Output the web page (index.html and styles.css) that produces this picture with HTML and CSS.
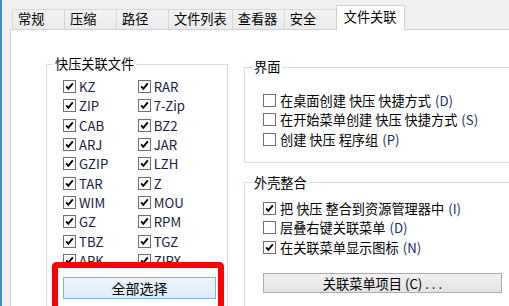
FILE: index.html
```html
<!DOCTYPE html>
<html lang="zh-CN">
<head>
  <meta charset="UTF-8" />
  <title>选项 - 文件关联</title>
  <link rel="stylesheet" href="styles.css">
</head>
<body>
  <div class="window">
    <div class="frame"></div>
    <div class="dialog">
      <ul class="tabs">
        <li class="tab">常规</li>
        <li class="tab">压缩</li>
        <li class="tab">路径</li>
        <li class="tab">文件列表</li>
        <li class="tab">查看器</li>
        <li class="tab">安全</li>
        <li class="tab active">文件关联</li>
      </ul>

      <div class="panel">
        <!-- 关联文件类型 -->
        <fieldset class="group group-types">
          <legend>快压关联文件</legend>
          <div class="type-grid">
            <label class="check"><span class="box"><svg viewBox="0 0 13 13"><path d="M2.6 6.4 L5.1 9.3 L10.4 2.9"/></svg></span>KZ</label>
            <label class="check"><span class="box"><svg viewBox="0 0 13 13"><path d="M2.6 6.4 L5.1 9.3 L10.4 2.9"/></svg></span>RAR</label>
            <label class="check"><span class="box"><svg viewBox="0 0 13 13"><path d="M2.6 6.4 L5.1 9.3 L10.4 2.9"/></svg></span>ZIP</label>
            <label class="check"><span class="box"><svg viewBox="0 0 13 13"><path d="M2.6 6.4 L5.1 9.3 L10.4 2.9"/></svg></span>7-Zip</label>
            <label class="check"><span class="box"><svg viewBox="0 0 13 13"><path d="M2.6 6.4 L5.1 9.3 L10.4 2.9"/></svg></span>CAB</label>
            <label class="check"><span class="box"><svg viewBox="0 0 13 13"><path d="M2.6 6.4 L5.1 9.3 L10.4 2.9"/></svg></span>BZ2</label>
            <label class="check"><span class="box"><svg viewBox="0 0 13 13"><path d="M2.6 6.4 L5.1 9.3 L10.4 2.9"/></svg></span>ARJ</label>
            <label class="check"><span class="box"><svg viewBox="0 0 13 13"><path d="M2.6 6.4 L5.1 9.3 L10.4 2.9"/></svg></span>JAR</label>
            <label class="check"><span class="box"><svg viewBox="0 0 13 13"><path d="M2.6 6.4 L5.1 9.3 L10.4 2.9"/></svg></span>GZIP</label>
            <label class="check"><span class="box"><svg viewBox="0 0 13 13"><path d="M2.6 6.4 L5.1 9.3 L10.4 2.9"/></svg></span>LZH</label>
            <label class="check"><span class="box"><svg viewBox="0 0 13 13"><path d="M2.6 6.4 L5.1 9.3 L10.4 2.9"/></svg></span>TAR</label>
            <label class="check"><span class="box"><svg viewBox="0 0 13 13"><path d="M2.6 6.4 L5.1 9.3 L10.4 2.9"/></svg></span>Z</label>
            <label class="check"><span class="box"><svg viewBox="0 0 13 13"><path d="M2.6 6.4 L5.1 9.3 L10.4 2.9"/></svg></span>WIM</label>
            <label class="check"><span class="box"><svg viewBox="0 0 13 13"><path d="M2.6 6.4 L5.1 9.3 L10.4 2.9"/></svg></span>MOU</label>
            <label class="check"><span class="box"><svg viewBox="0 0 13 13"><path d="M2.6 6.4 L5.1 9.3 L10.4 2.9"/></svg></span>GZ</label>
            <label class="check"><span class="box"><svg viewBox="0 0 13 13"><path d="M2.6 6.4 L5.1 9.3 L10.4 2.9"/></svg></span>RPM</label>
            <label class="check"><span class="box"><svg viewBox="0 0 13 13"><path d="M2.6 6.4 L5.1 9.3 L10.4 2.9"/></svg></span>TBZ</label>
            <label class="check"><span class="box"><svg viewBox="0 0 13 13"><path d="M2.6 6.4 L5.1 9.3 L10.4 2.9"/></svg></span>TGZ</label>
            <label class="check"><span class="box"><svg viewBox="0 0 13 13"><path d="M2.6 6.4 L5.1 9.3 L10.4 2.9"/></svg></span>APK</label>
            <label class="check"><span class="box"><svg viewBox="0 0 13 13"><path d="M2.6 6.4 L5.1 9.3 L10.4 2.9"/></svg></span>ZIPX</label>
          </div>
          <div class="highlight">
            <button class="btn btn-blue">全部选择</button>
          </div>
        </fieldset>

        <div class="side">
          <fieldset class="group group-ui">
            <legend>界面</legend>
            <label class="check"><span class="box"></span>在桌面创建 快压 快捷方式 <span class="key">(D)</span></label>
            <label class="check"><span class="box"></span>在开始菜单创建 快压 快捷方式 <span class="key">(S)</span></label>
            <label class="check"><span class="box"></span>创建 快压 程序组 <span class="key">(P)</span></label>
          </fieldset>

          <fieldset class="group group-shell">
            <legend>外壳整合</legend>
            <label class="check"><span class="box"><svg viewBox="0 0 13 13"><path d="M2.6 6.4 L5.1 9.3 L10.4 2.9"/></svg></span>把 快压 整合到资源管理器中 <span class="key">(I)</span></label>
            <label class="check"><span class="box"></span>层叠右键关联菜单 <span class="key">(D)</span></label>
            <label class="check"><span class="box"><svg viewBox="0 0 13 13"><path d="M2.6 6.4 L5.1 9.3 L10.4 2.9"/></svg></span>在关联菜单显示图标 <span class="key">(N)</span></label>
            <button class="btn btn-gray">关联菜单项目 (C) . . .</button>
          </fieldset>
        </div>
      </div>
    </div>
  </div>
</body>
</html>
```

FILE: styles.css
```css
body {
  margin: 0;
  width: 509px;
  height: 306px;
  overflow: hidden;
  background-color: #f0f0f0;
  color: #000;
  font-family: "Noto Sans CJK SC", "Noto Sans", sans-serif;
  font-size: 13.2px;
}

.window {
  display: flex;
  height: 306px;
}

.frame {
  flex: none;
  width: 2px;
  background: #3c8dc5;
}

.dialog {
  display: flex;
  flex-direction: column;
  width: 499px;
  padding: 5px 0 0 8px;
}

/* onglets */
.tabs {
  display: flex;
  align-items: flex-end;
  height: 25px;
  margin: 0 0 -1px 2px;
  padding: 0;
  list-style: none;
  position: relative;
  z-index: 1;
}

.tab {
  box-sizing: border-box;
  min-width: 53px;
  height: 20px;
  margin: 0 -1px 1px 0;
  padding: 0 5px;
  border: 1px solid #d9d9d9;
  border-bottom: none;
  background: linear-gradient(#f2f2f2, #ebebeb);
  line-height: 18px;
  white-space: nowrap;
}

.tab.active {
  height: 25px;
  margin-bottom: 0;
  padding: 0 7px;
  background: #fff;
  border-color: #d0d0d0;
  line-height: 22px;
}

/* la capture coupe le panneau à droite et en bas */
.panel {
  flex: 1;
  display: flex;
  padding: 25px 0 0 35px;
  background: #fff;
  border: 1px solid #d0d0d0;
  border-right: none;
  border-bottom: none;
  overflow: hidden;
}

/* groupes */
.group {
  margin: 0;
  min-width: 0;
  border: 1px solid #dcdcdc;
}

.group legend {
  padding: 0 2px;
  line-height: 18px;
}

.group-types {
  box-sizing: border-box;
  width: 182px;
  padding: 4px 0 0 16px;
  border-bottom: none;
}

.group-types legend {
  margin-left: -10px;
}

.type-grid {
  display: grid;
  grid-template-columns: 74.7px auto;
  grid-auto-rows: 19.3px;
  color: #1a2040;
}

.side {
  flex: 1;
  display: flex;
  flex-direction: column;
  margin: 3px 0 0 16px;
}

.group-ui {
  padding: 15px 0 13px 18px;
  border-right: none;
}

.group-ui legend,
.group-shell legend {
  margin-left: -11px;
}

.group-shell {
  flex: 1;
  margin-top: 11px;
  padding: 7px 0 0 18px;
  border-right: none;
  border-bottom: none;
}

.check {
  display: flex;
  align-items: center;
  gap: 4px;
  height: 19.3px;
  white-space: nowrap;
}

.type-grid .check {
  gap: 3px;
}

.box {
  flex: none;
  box-sizing: border-box;
  width: 13px;
  height: 13px;
  border: 1px solid #707070;
  background: #fff;
}

.box svg {
  display: block;
  width: 11px;
  height: 11px;
}

.box path {
  fill: none;
  stroke: #000;
  stroke-width: 2.2;
}

.key {
  color: #1a2a6c;
}

/* boutons */
.btn {
  display: block;
  font-family: inherit;
  font-size: 13.2px;
  color: #000;
  padding: 0;
  cursor: pointer;
}

.btn-blue {
  width: 153px;
  height: 22px;
  border: 1px solid #7eb4ea;
  background: linear-gradient(#edf5fd, #dcecfc);
  font-size: 14px;
}

.btn-gray {
  width: 239px;
  height: 20px;
  margin-top: 16px;
  border: 1px solid #adadad;
  background: linear-gradient(#f0f0f0, #e3e3e3);
}

/* cadre rouge d'annotation */
.highlight {
  position: relative;
  margin-top: 7px;
  width: 153px;
}

.highlight::before {
  content: "";
  position: absolute;
  top: -15px;
  left: -11px;
  right: -8px;
  height: 44px;
  box-sizing: border-box;
  border: 6px solid #ff0000;
  border-bottom: none;
  border-radius: 5px 5px 0 0;
}
```
